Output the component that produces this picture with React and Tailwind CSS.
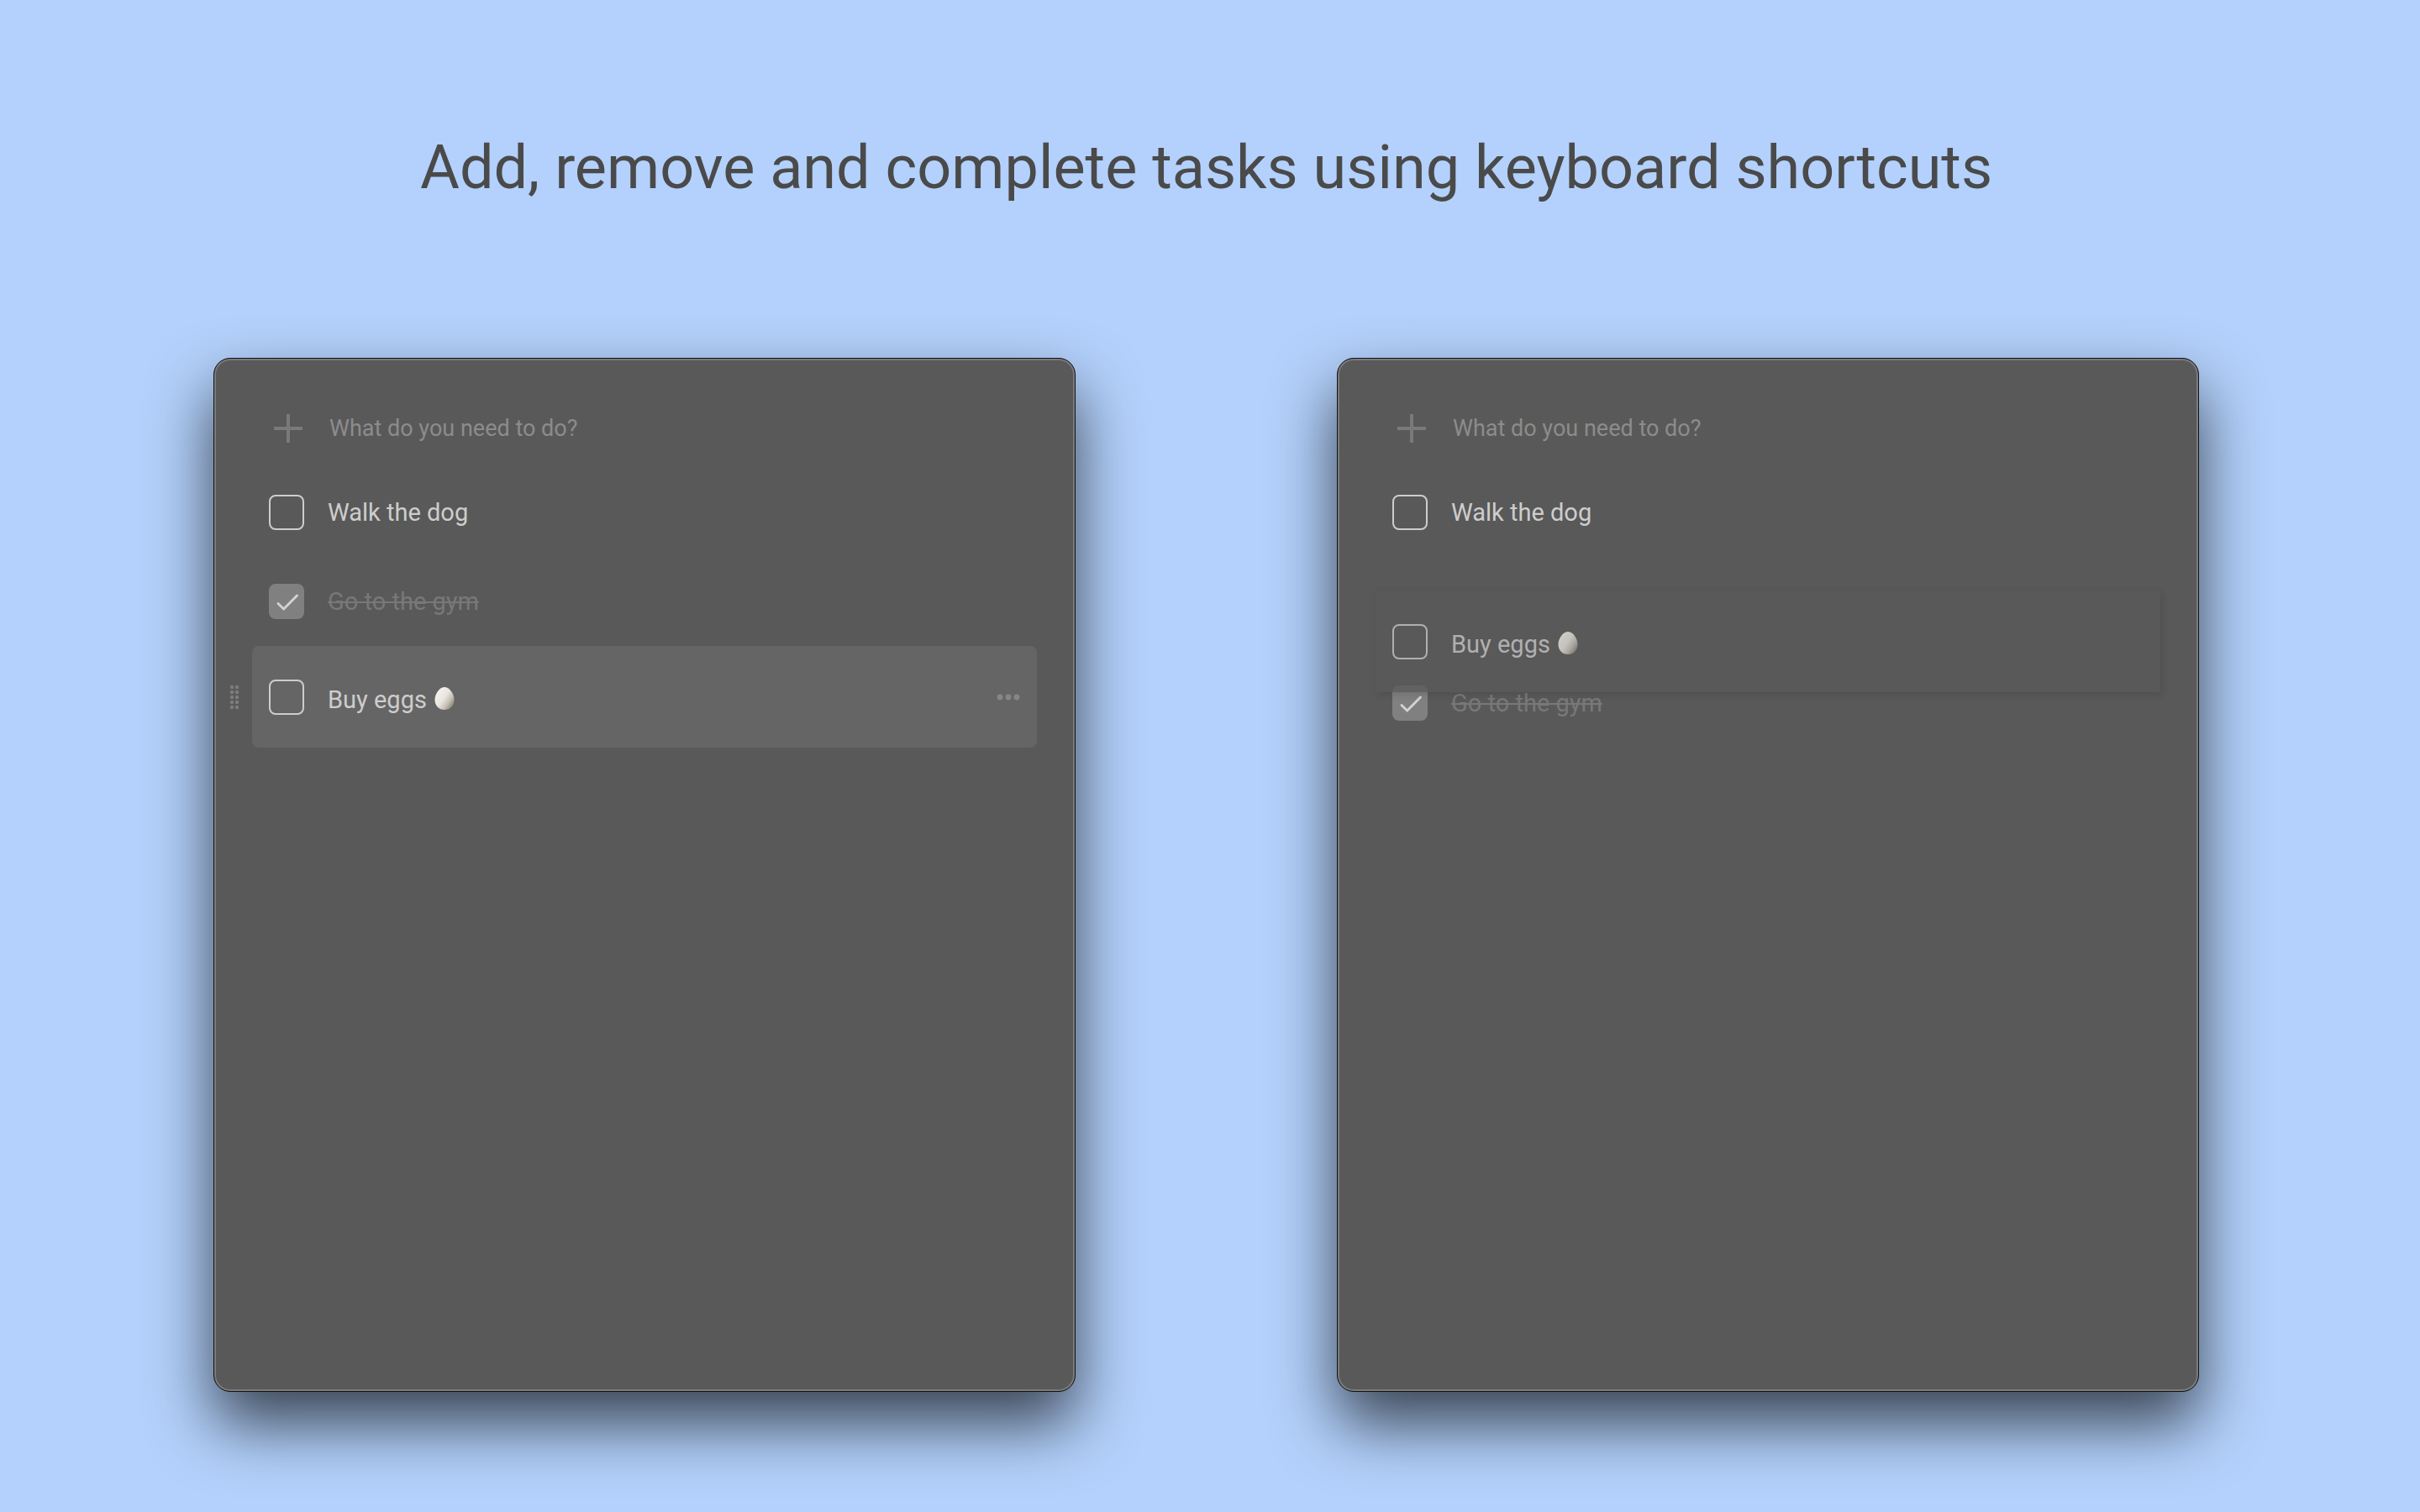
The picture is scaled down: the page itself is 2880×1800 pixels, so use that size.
import React, { useState } from 'react';

const initialTasks = [
  { id: 'walk', text: 'Walk the dog', done: false },
  { id: 'gym', text: 'Go to the gym', done: true },
  { id: 'eggs', text: 'Buy eggs', emoji: true, done: false },
];

const PlusIcon = () => (
  <svg viewBox="0 0 42 42" className="size-[42px] shrink-0" stroke="#7a7a7a" strokeWidth="4" aria-hidden="true">
    <path d="M21 4v34M4 21h34" />
  </svg>
);

// tall on purpose, an emoji makes its line higher than plain text does
const EggEmoji = ({ id }) => (
  <svg viewBox="-2 0 28 57" className="inline-block h-[57px] w-7 align-[-15px]" role="img" aria-label="egg">
    <defs>
      <linearGradient id={id} x1="0.1" y1="0.2" x2="0.9" y2="0.85">
        <stop offset="0" stopColor="#f6f3ee" />
        <stop offset="0.45" stopColor="#e9e6e0" />
        <stop offset="0.75" stopColor="#c4beb5" />
        <stop offset="1" stopColor="#8f8678" />
      </linearGradient>
    </defs>
    <path d="M12 17C17.500 17 23.500 24.500 23.500 32C23.500 39.500 18.500 44 12 44C5.500 44 0.500 39.500 0.500 32C0.500 24.500 6.500 17 12 17Z" fill={`url(#${id})`} />
  </svg>
);

const DragHandle = () => (
  <svg viewBox="0 0 12 30" className="h-[30px] w-3" fill="#7d7d7d" aria-hidden="true">
    {[3, 9, 15, 21, 27].map((y) => (
      <React.Fragment key={y}>
        <circle cx="3" cy={y} r="2.200" />
        <circle cx="9" cy={y} r="2.200" />
      </React.Fragment>
    ))}
  </svg>
);

const MoreIcon = () => (
  <svg viewBox="0 0 28 8" className="h-2 w-7" fill="#868686" aria-hidden="true">
    <circle cx="4" cy="4" r="3.400" />
    <circle cx="14" cy="4" r="3.400" />
    <circle cx="24" cy="4" r="3.400" />
  </svg>
);

const TaskRow = ({ listId, task, onToggle, active }) => {
  const inputId = `${listId}-${task.id}`;
  return (
    <div className={`relative flex items-center gap-7 rounded-lg px-5 py-8 ${active ? 'bg-[#656565]' : ''}`}>
      {active && (
        <button type="button" aria-label="Move task" className="absolute right-full mr-[15px] cursor-grab">
          <DragHandle />
        </button>
      )}
      <span className="grid shrink-0">
        <input
          id={inputId}
          type="checkbox"
          checked={task.done}
          onChange={() => onToggle(task.id)}
          className="col-start-1 row-start-1 size-[42px] appearance-none rounded-lg border-2 border-[#cdcdcd] checked:border-[#808080] checked:bg-[#808080]"
        />
        {task.done && (
          <svg viewBox="0 0 42 42" className="pointer-events-none col-start-1 row-start-1 size-[42px]" fill="none" stroke="#d2d2d2" strokeWidth="3" strokeLinecap="round" aria-hidden="true">
            <path d="M11 23.500L17.700 30L33.500 14" />
          </svg>
        )}
      </span>
      <label
        htmlFor={inputId}
        className={`flex-1 text-[29px] leading-[34px] ${task.done ? 'text-[#787878] line-through' : 'text-[#cdcdcd]'}`}
      >
        {task.text}
        {task.emoji && <> <EggEmoji id={`${inputId}-egg`} /></>}
      </label>
      {active && (
        <button type="button" aria-label="Task menu">
          <MoreIcon />
        </button>
      )}
    </div>
  );
};

const TodoWindow = ({ listId, activeId, draggingId }) => {
  const [tasks, setTasks] = useState(initialTasks);

  const handleToggle = (id) => {
    setTasks(tasks.map((t) => (t.id === id ? { ...t, done: !t.done } : t)));
  };

  const dragged = tasks.find((t) => t.id === draggingId);
  const resting = tasks.filter((t) => t.id !== draggingId);

  return (
    <section className="rounded-[20px] border border-[#101215] bg-[#595959] px-[45px] pt-[35px] shadow-[inset_0_0_0_2px_#7b7b7b,0_38px_76px_rgba(0,0,0,0.68)]">
      <div className="flex h-[95px] items-center gap-7 pl-[22px]">
        <PlusIcon />
        <input
          type="text"
          aria-label="New task"
          placeholder="What do you need to do?"
          className="w-full bg-transparent text-[27px] leading-[34px] text-[#cdcdcd] outline-none placeholder:text-[#8c8c8c]"
        />
      </div>
      {resting.map((task, index) => (
        <React.Fragment key={task.id}>
          {dragged && index === 1 && (
            // open slot the dragged task hovers over
            <div className="relative h-[121px]">
              <div className="absolute inset-x-0 top-10 z-10 bg-[#595959] opacity-75 shadow-[2px_3px_8px_rgba(0,0,0,0.15)]">
                <TaskRow listId={listId} task={dragged} onToggle={handleToggle} />
              </div>
            </div>
          )}
          <TaskRow listId={listId} task={task} onToggle={handleToggle} active={task.id === activeId} />
        </React.Fragment>
      ))}
    </section>
  );
};

const App = () => {
  return (
    <main className="flex min-h-screen flex-col bg-[#b3d1fc] pr-[263px] pb-[143px] pl-[254px] font-[Roboto,sans-serif]">
      <h1 className="pt-[158px] pb-[184px] text-center text-[72px] leading-[84px] text-[#4a4a4a]">
        Add, remove and complete tasks using keyboard shortcuts
      </h1>
      <div className="grid flex-1 grid-cols-2 gap-[311px]">
        <TodoWindow listId="left" activeId="eggs" />
        <TodoWindow listId="right" draggingId="eggs" />
      </div>
    </main>
  );
};

export default App;
